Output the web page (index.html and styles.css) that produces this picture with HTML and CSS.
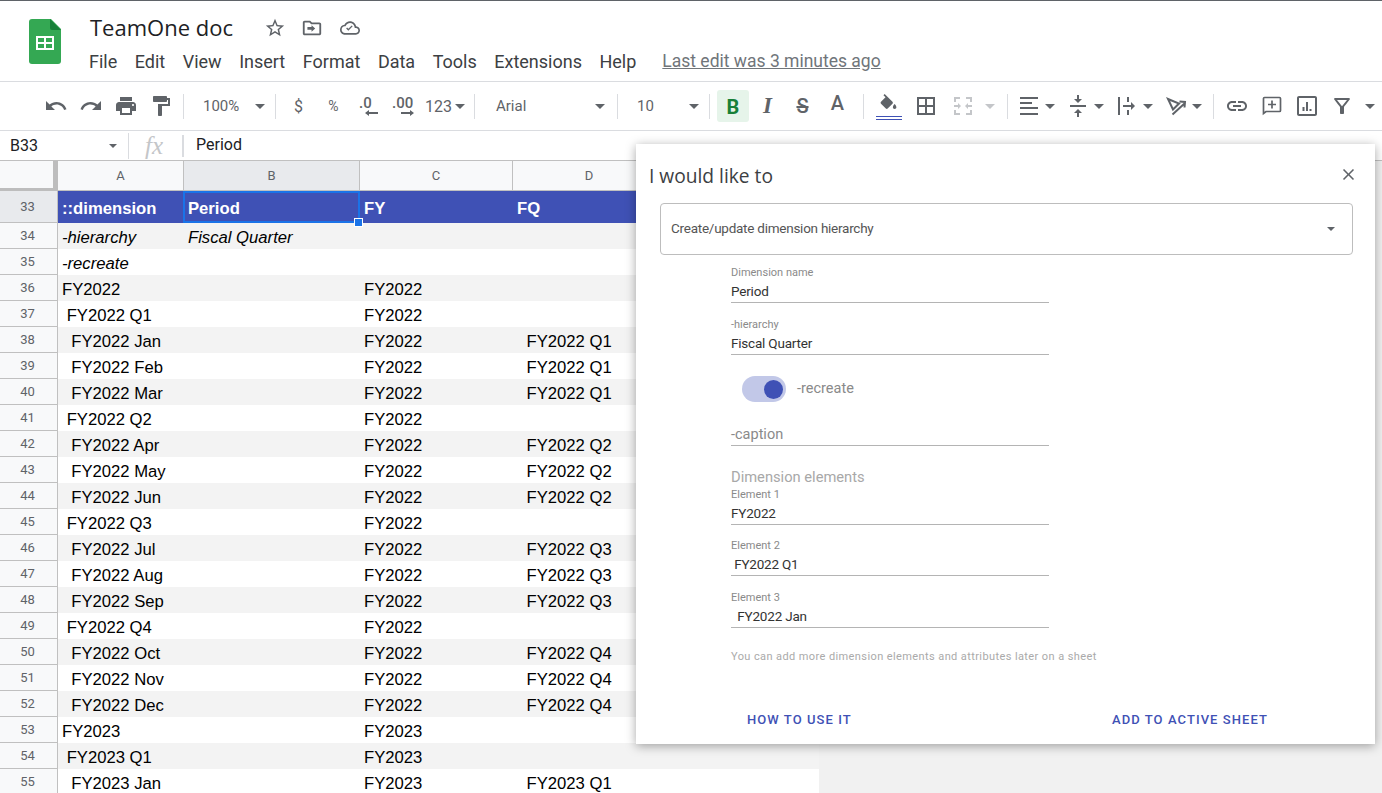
FILE: index.html
```html
<!DOCTYPE html>
<html lang="en">
<head>
    <meta charset="UTF-8">
    <title>TeamOne doc</title>
    <link rel="stylesheet" href="styles.css">
</head>
<body>

<header class="titlebar">
    <svg class="logo" width="32" height="45" viewBox="0 0 32 45">
        <path fill="#34a853" d="M3 0h19l10 10v32a3 3 0 0 1-3 3H3a3 3 0 0 1-3-3V3a3 3 0 0 1 3-3z"/>
        <path fill="#188038" d="M21 0l11 11H23a2 2 0 0 1-2-2z"/>
        <path fill="#fff" d="M7 17h18v14H7zm2 2v4h6v-4zm8 0v4h6v-4zm-8 6v4h6v-4zm8 0v4h6v-4z" fill-rule="evenodd"/>
    </svg>
    <div class="titlebar-main">
        <div class="doc-row">
            <span class="doc-name">TeamOne doc</span>
            <svg class="doc-icon" viewBox="0 0 24 24"><path d="M22 9.24l-7.19-.62L12 2 9.19 8.63 2 9.24l5.46 4.73L5.82 21 12 17.27 18.18 21l-1.63-7.03L22 9.24zM12 15.4l-3.76 2.27 1-4.28-3.32-2.88 4.38-.38L12 6.1l1.71 4.04 4.38.38-3.32 2.88 1 4.28L12 15.4z"/></svg>
            <svg class="doc-icon" viewBox="0 0 24 24"><path d="M20 6h-8l-2-2H4c-1.1 0-2 .9-2 2v12c0 1.1.9 2 2 2h16c1.1 0 2-.9 2-2V8c0-1.1-.9-2-2-2zm0 12H4V6h5.17l2 2H20v10zm-8.5-2l4-3.5-4-3.500V11H7v3h4.500z"/></svg>
            <svg class="doc-icon doc-icon-cloud" viewBox="0 0 24 24"><path d="M19.35 10.04C18.67 6.59 15.64 4 12 4 9.11 4 6.6 5.64 5.35 8.04 2.34 8.36 0 10.91 0 14c0 3.31 2.69 6 6 6h13c2.76 0 5-2.240 5-5 0-2.640-2.050-4.780-4.650-4.960zM19 18H6c-2.210 0-4-1.790-4-4 0-2.050 1.530-3.760 3.560-3.970l1.070-.11.500-.95C8.080 7.140 9.940 6 12 6c2.620 0 4.880 1.860 5.390 4.430l.3 1.500 1.530.11c1.560.1 2.780 1.410 2.780 2.960 0 1.650-1.350 3-3 3zm-9-2.800l-2.600-2.600 1.100-1.100 1.500 1.500 4.100-4.100 1.100 1.100z"/></svg>
        </div>
        <nav class="menu">
            <span>File</span><span>Edit</span><span>View</span><span>Insert</span><span>Format</span><span>Data</span><span>Tools</span><span>Extensions</span><span>Help</span>
            <a class="last-edit">Last edit was 3 minutes ago</a>
        </nav>
    </div>
</header>

<div class="toolbar">
    <span class="tb"><svg viewBox="0 0 24 24"><path d="M12.500 8c-2.650 0-5.050.99-6.900 2.600L2 7v9h9l-3.620-3.620c1.390-1.160 3.160-1.880 5.120-1.880 3.540 0 6.550 2.310 7.600 5.500l2.370-.78C21.080 11.030 17.150 8 12.500 8z"/></svg></span>
    <span class="tb"><svg viewBox="0 0 24 24"><path d="M18.400 10.600C16.550 8.990 14.150 8 11.500 8c-4.650 0-8.580 3.030-9.960 7.220L3.900 16c1.050-3.190 4.050-5.500 7.600-5.500 1.950 0 3.730.72 5.120 1.880L13 16h9V7l-3.600 3.600z"/></svg></span>
    <span class="tb"><svg viewBox="0 0 24 24"><path d="M19 8H5c-1.660 0-3 1.340-3 3v6h4v4h12v-4h4v-6c0-1.660-1.340-3-3-3zm-3 11H8v-5h8v5zm3-7c-.55 0-1-.45-1-1s.45-1 1-1 1 .45 1 1-.45 1-1 1zm-1-9H6v4h12V3z"/></svg></span>
    <span class="tb"><svg viewBox="0 0 24 24"><path d="M18 4V3c0-.55-.45-1-1-1H5c-.55 0-1 .45-1 1v4c0 .55.45 1 1 1h12c.55 0 1-.45 1-1V6h1v4H9v11c0 .55.45 1 1 1h2c.55 0 1-.45 1-1v-9h8V4h-3z"/></svg></span>
    <i class="sep sep-first"></i>
    <span class="pick pick-zoom">100%<b class="arrow"></b></span>
    <i class="sep"></i>
    <span class="tb tb-text tb-after">$</span>
    <span class="tb tb-text tb-small">%</span>
    <span class="tb"><svg viewBox="0 0 24 24"><text x="2" y="14" class="dec">.0</text><path d="M22 19H13v-2l-4 3 4 3v-2h9z" transform="translate(-1 -1)"/></svg></span>
    <span class="tb"><svg viewBox="0 0 24 24"><text x="0" y="14" class="dec">.00</text><path d="M10 19h9v-2l4 3-4 3v-2h-9z" transform="translate(-1 -1)"/></svg></span>
    <span class="num-format">123<b class="arrow"></b></span>
    <i class="sep sep-wide"></i>
    <span class="pick pick-font">Arial<b class="arrow"></b></span>
    <i class="sep"></i>
    <span class="pick pick-zoom">10<b class="arrow"></b></span>
    <i class="sep"></i>
    <span class="tb-bold">B</span>
    <span class="tb tb-glyph tb-italic">I</span>
    <span class="tb tb-glyph tb-strike">S</span>
    <span class="tb tb-glyph tb-color">A</span>
    <i class="sep sep-colors"></i>
    <span class="tb37 tb37-first fill-btn">
        <svg viewBox="0 0 24 24"><path d="M16.560 8.940L7.620 0 6.210 1.410l2.380 2.380-5.150 5.150c-.59.59-.59 1.540 0 2.120l5.500 5.500c.29.29.68.44 1.060.44s.77-.15 1.060-.44l5.500-5.500c.59-.58.59-1.530 0-2.120zM19 11.500s-2 2.170-2 3.500c0 1.100.9 2 2 2s2-.9 2-2c0-1.330-2-3.500-2-3.500z"/></svg>
        <i class="fill-bar"></i>
    </span>
    <span class="tb37"><svg viewBox="0 0 24 24"><path d="M3 3v18h18V3H3zm8 16H5v-6h6v6zm0-8H5V5h6v6zm8 8h-6v-6h6v6zm0-8h-6V5h6v6z"/></svg></span>
    <span class="tb37 tb-off"><svg viewBox="0 0 24 24"><path d="M3 3h6v2H5v3H3zm12 0h6v5h-2V5h-4zM3 16h2v3h4v2H3zm16 0h2v5h-6v-2h4zM3 11h4V9l3 3-3 3v-2H3zm18 0h-4V9l-3 3 3 3v-2h4z"/></svg></span>
    <b class="arrow arrow-off"></b>
    <i class="sep sep-merge"></i>
    <span class="pair pair-first"><svg viewBox="0 0 24 24"><path d="M3 3h18v2H3zm0 5h12v2H3zm0 5h18v2H3zm0 6h18v2H3z"/></svg><b class="arrow"></b></span>
    <span class="pair"><svg viewBox="0 0 24 24"><path d="M8 19h3v4h2v-4h3l-4-4-4 4zm8-14h-3V1h-2v4H8l4 4 4-4zM4 11v2h16v-2H4z"/></svg><b class="arrow"></b></span>
    <span class="pair"><svg viewBox="0 0 24 24"><path d="M3 3h2v18H3zm9 0h2v5h-2zm0 13h2v5h-2zM8 11h8V8l4 4-4 4v-3H8z"/></svg><b class="arrow"></b></span>
    <span class="pair"><svg class="line-icon" viewBox="0 0 24 24"><path d="M4 5l11 4.500-6 6zM8.500 20.500l12-11M15.500 7.500l5.500 .5-.5 5.500"/></svg><b class="arrow"></b></span>
    <i class="sep"></i>
    <span class="tb tb-after"><svg viewBox="0 0 24 24"><path d="M3.900 12c0-1.710 1.390-3.100 3.100-3.100h4V7H7c-2.760 0-5 2.240-5 5s2.240 5 5 5h4v-1.900H7c-1.710 0-3.100-1.390-3.100-3.100zM8 13h8v-2H8v2zm9-6h-4v1.900h4c1.710 0 3.100 1.390 3.100 3.100s-1.390 3.100-3.100 3.100h-4V17h4c2.760 0 5-2.240 5-5s-2.240-5-5-5z"/></svg></span>
    <span class="tb"><svg class="line-icon line-thin" viewBox="0 0 24 24"><path d="M3.500 19.500V4.500a1 1 0 0 1 1-1h15a1 1 0 0 1 1 1v12a1 1 0 0 1-1 1H6zM12 6.500v8M8 10.500h8"/></svg></span>
    <span class="tb"><svg viewBox="0 0 24 24"><path d="M20 2H4c-1.100 0-2 .9-2 2v16c0 1.100.9 2 2 2h16c1.100 0 2-.9 2-2V4c0-1.100-.9-2-2-2zm0 18H4V4h16v16zM7.500 13h2v4h-2zm3.500-5h2v9h-2zm3.500 7h2v2h-2z"/></svg></span>
    <span class="tb"><svg viewBox="0 0 24 24"><path d="M7 6h10l-5.010 6.300L7 6zm-2.750-.39C6.270 8.200 10 13 10 13v6c0 .55.45 1 1 1h2c.55 0 1-.45 1-1v-6s3.720-4.800 5.740-7.390c.51-.66.04-1.610-.79-1.610H5.040c-.83 0-1.300.95-.79 1.610z"/></svg></span>
    <b class="arrow arrow-last"></b>
</div>

<div class="formula">
    <div class="namebox">B33<b class="arrow arrow-mini"></b></div>
    <span class="fx">fx</span>
    <div class="formula-value">Period</div>
</div>

<div class="sheet">
    <div class="col-head">
        <div class="corner"></div>
        <div class="col col-a">A</div>
        <div class="col col-b col-on">B</div>
        <div class="col col-c">C</div>
        <div class="col col-d">D</div>
    </div>

    <div class="row row-head">
        <div class="num num-on">33</div>
        <div class="cell col-a">::dimension</div>
        <div class="cell col-b">Period<i class="selection"></i></div>
        <div class="cell col-c">FY</div>
        <div class="cell col-d">FQ</div>
    </div>
    <div class="row"><div class="num">34</div><div class="cell col-a em">-hierarchy</div><div class="cell col-b em">Fiscal Quarter</div><div class="cell col-c"></div><div class="cell col-d"></div></div>
    <div class="row"><div class="num">35</div><div class="cell col-a em">-recreate</div><div class="cell col-b"></div><div class="cell col-c"></div><div class="cell col-d"></div></div>
    <div class="row"><div class="num">36</div><div class="cell col-a">FY2022</div><div class="cell col-b"></div><div class="cell col-c">FY2022</div><div class="cell col-d"></div></div>
    <div class="row"><div class="num">37</div><div class="cell col-a"> FY2022 Q1</div><div class="cell col-b"></div><div class="cell col-c">FY2022</div><div class="cell col-d"></div></div>
    <div class="row"><div class="num">38</div><div class="cell col-a">  FY2022 Jan</div><div class="cell col-b"></div><div class="cell col-c">FY2022</div><div class="cell col-d">FY2022 Q1</div></div>
    <div class="row"><div class="num">39</div><div class="cell col-a">  FY2022 Feb</div><div class="cell col-b"></div><div class="cell col-c">FY2022</div><div class="cell col-d">FY2022 Q1</div></div>
    <div class="row"><div class="num">40</div><div class="cell col-a">  FY2022 Mar</div><div class="cell col-b"></div><div class="cell col-c">FY2022</div><div class="cell col-d">FY2022 Q1</div></div>
    <div class="row"><div class="num">41</div><div class="cell col-a"> FY2022 Q2</div><div class="cell col-b"></div><div class="cell col-c">FY2022</div><div class="cell col-d"></div></div>
    <div class="row"><div class="num">42</div><div class="cell col-a">  FY2022 Apr</div><div class="cell col-b"></div><div class="cell col-c">FY2022</div><div class="cell col-d">FY2022 Q2</div></div>
    <div class="row"><div class="num">43</div><div class="cell col-a">  FY2022 May</div><div class="cell col-b"></div><div class="cell col-c">FY2022</div><div class="cell col-d">FY2022 Q2</div></div>
    <div class="row"><div class="num">44</div><div class="cell col-a">  FY2022 Jun</div><div class="cell col-b"></div><div class="cell col-c">FY2022</div><div class="cell col-d">FY2022 Q2</div></div>
    <div class="row"><div class="num">45</div><div class="cell col-a"> FY2022 Q3</div><div class="cell col-b"></div><div class="cell col-c">FY2022</div><div class="cell col-d"></div></div>
    <div class="row"><div class="num">46</div><div class="cell col-a">  FY2022 Jul</div><div class="cell col-b"></div><div class="cell col-c">FY2022</div><div class="cell col-d">FY2022 Q3</div></div>
    <div class="row"><div class="num">47</div><div class="cell col-a">  FY2022 Aug</div><div class="cell col-b"></div><div class="cell col-c">FY2022</div><div class="cell col-d">FY2022 Q3</div></div>
    <div class="row"><div class="num">48</div><div class="cell col-a">  FY2022 Sep</div><div class="cell col-b"></div><div class="cell col-c">FY2022</div><div class="cell col-d">FY2022 Q3</div></div>
    <div class="row"><div class="num">49</div><div class="cell col-a"> FY2022 Q4</div><div class="cell col-b"></div><div class="cell col-c">FY2022</div><div class="cell col-d"></div></div>
    <div class="row"><div class="num">50</div><div class="cell col-a">  FY2022 Oct</div><div class="cell col-b"></div><div class="cell col-c">FY2022</div><div class="cell col-d">FY2022 Q4</div></div>
    <div class="row"><div class="num">51</div><div class="cell col-a">  FY2022 Nov</div><div class="cell col-b"></div><div class="cell col-c">FY2022</div><div class="cell col-d">FY2022 Q4</div></div>
    <div class="row"><div class="num">52</div><div class="cell col-a">  FY2022 Dec</div><div class="cell col-b"></div><div class="cell col-c">FY2022</div><div class="cell col-d">FY2022 Q4</div></div>
    <div class="row"><div class="num">53</div><div class="cell col-a">FY2023</div><div class="cell col-b"></div><div class="cell col-c">FY2023</div><div class="cell col-d"></div></div>
    <div class="row"><div class="num">54</div><div class="cell col-a"> FY2023 Q1</div><div class="cell col-b"></div><div class="cell col-c">FY2023</div><div class="cell col-d"></div></div>
    <div class="row"><div class="num">55</div><div class="cell col-a">  FY2023 Jan</div><div class="cell col-b"></div><div class="cell col-c">FY2023</div><div class="cell col-d">FY2023 Q1</div></div>
</div>

<!-- add-on dialog, lies over the sheet -->
<section class="dialog">
    <div class="dialog-head">
        <h2>I would like to</h2>
        <svg class="close" viewBox="0 0 24 24"><path d="M19 6.410L17.590 5 12 10.590 6.410 5 5 6.410 10.590 12 5 17.590 6.410 19 12 13.410 17.590 19 19 17.590 13.410 12z"/></svg>
    </div>
    <div class="select"><span>Create/update dimension hierarchy</span><b class="arrow arrow-select"></b></div>
    <div class="form">
        <div class="field"><label>Dimension name</label><div class="value">Period</div></div>
        <div class="field"><label>-hierarchy</label><div class="value">Fiscal Quarter</div></div>
        <div class="switch-row">
            <span class="switch"><i></i></span>
            <span class="switch-label">-recreate</span>
        </div>
        <div class="value value-empty">-caption</div>
        <div class="elements-title">Dimension elements</div>
        <div class="field"><label>Element 1</label><div class="value">FY2022</div></div>
        <div class="field"><label>Element 2</label><div class="value"> FY2022 Q1</div></div>
        <div class="field"><label>Element 3</label><div class="value">  FY2022 Jan</div></div>
        <p class="note">You can add more dimension elements and attributes later on a sheet</p>
    </div>
    <div class="actions">
        <span class="action">HOW TO USE IT</span>
        <span class="action">ADD TO ACTIVE SHEET</span>
    </div>
</section>

</body>
</html>
```

FILE: styles.css
```css
html, body {
    height: 100%;
}
body {
    margin: 0;
    overflow: hidden;
    position: relative;
    font-family: "Liberation Sans", Arial, sans-serif;
    background-color: #fff;
    border-top: 1px solid #5f6368;
    box-sizing: border-box;
}

/* title + menus */
.titlebar {
    height: 81px;
    display: flex;
    box-sizing: border-box;
    border-bottom: 1px solid #dadce0;
}
.logo {
    margin: 18px 0 0 29px;
}
.titlebar-main {
    margin-left: 29px;
}
.doc-row {
    height: 38px;
    display: flex;
    align-items: center;
    margin-top: 8px;
}
.doc-name {
    font-family: "Open Sans", sans-serif;
    font-size: 22px;
    color: #202124;
    margin: -2px 31px 0 0;
    width: 143px;
    white-space: nowrap;
}
.doc-icon {
    width: 22px;
    height: 22px;
    fill: #5f6368;
    margin-right: 15px;
}
.doc-icon-cloud {
    width: 20px;
    height: 20px;
    margin-left: 2px;
}
.menu {
    display: flex;
    font-family: Roboto, sans-serif;
    font-size: 18px;
    color: #3c4043;
    gap: 17.5px;
    margin-top: 4px;
    margin-left: -1px;
    white-space: nowrap;
}
.last-edit {
    margin-left: 8.5px;
    font-size: 17.5px;
    line-height: 21px;
    color: #70757a;
    text-decoration: underline;
}

/* toolbar */
.toolbar {
    height: 49px;
    box-sizing: border-box;
    display: flex;
    align-items: center;
    padding-left: 38px;
    border-bottom: 1px solid #dadce0;
    font-family: Roboto, sans-serif;
    color: #5f6368;
    white-space: nowrap;
}
.toolbar svg {
    width: 24px;
    height: 24px;
    fill: #5f6368;
    flex: none;
}
.toolbar .line-icon {
    fill: none;
    stroke: #5f6368;
    stroke-width: 2;
}
.toolbar .line-thin {
    stroke-width: 1.7;
}
.tb {
    width: 35px;
    height: 32px;
    display: flex;
    align-items: center;
    justify-content: center;
    flex: none;
}
.tb-text {
    font-size: 16px;
}
.tb-small {
    font-size: 14px;
}
.tb-after {
    margin-left: 5px;
}
.tb37 {
    width: 37px;
    height: 32px;
    display: flex;
    flex-direction: column;
    align-items: center;
    justify-content: center;
    flex: none;
}
.tb37-first {
    margin-left: 6px;
}
.tb-off svg {
    fill: #c4c6c9;
}
.toolbar .fill-btn svg {
    width: 21px;
    height: 21px;
    margin-top: 1px;
}
.fill-bar {
    display: block;
    width: 26px;
    height: 4px;
    border-top: 1px solid #3f51b5;
    border-bottom: 1px solid #3f51b5;
    box-sizing: border-box;
    margin-top: 1px;
}
.dec {
    font: 500 15px Roboto, sans-serif;
    fill: #5f6368;
}
.num-format {
    width: 48px;
    box-sizing: border-box;
    padding-left: 4px;
    font-size: 16px;
    display: flex;
    align-items: center;
    gap: 3px;
    flex: none;
}
.sep {
    width: 1px;
    height: 25px;
    background: #dadce0;
    flex: none;
}
.sep-first {
    margin-left: 5px;
}
.sep-wide {
    margin-left: 5px;
}
.sep-colors {
    margin-left: 8px;
}
.sep-merge {
    margin-left: 12px;
}
.pick {
    display: flex;
    align-items: center;
    justify-content: space-between;
    box-sizing: border-box;
    font-size: 15px;
    flex: none;
}
.pick-zoom {
    width: 91px;
    padding: 0 10px 0 19px;
}
.pick-font {
    width: 142px;
    padding: 0 12px 0 21px;
}
.arrow {
    display: block;
    width: 0;
    height: 0;
    border-left: 5px solid transparent;
    border-right: 5px solid transparent;
    border-top: 5px solid #5f6368;
    flex: none;
}
.arrow-off {
    margin-left: 4px;
    border-top-color: #c4c6c9;
}
.arrow-last {
    margin-left: 6px;
}
.arrow-mini {
    border-left-width: 4px;
    border-right-width: 4px;
    border-top-width: 4px;
}
.arrow-select {
    border-left-width: 4px;
    border-right-width: 4px;
    border-top-width: 4px;
    margin-top: 2px;
}
.tb-bold {
    width: 32px;
    height: 32px;
    margin-left: 7px;
    border-radius: 3px;
    background: #e6f4ea;
    color: #188038;
    font-family: Roboto, sans-serif;
    font-weight: 700;
    font-size: 20px;
    line-height: 34px;
    text-align: center;
    flex: none;
}
.tb-glyph {
    font-size: 20px;
    font-family: Roboto, sans-serif;
}
.tb-italic {
    margin-left: 1px;
    font-family: "Liberation Serif", serif;
    font-size: 23px;
    font-weight: 700;
    font-style: italic;
}
.tb-strike {
    font-weight: 500;
    text-decoration: line-through;
}
.tb-color {
    font-weight: 500;
    padding-bottom: 6px;
    box-sizing: border-box;
}
.pair {
    width: 49px;
    display: flex;
    align-items: center;
    flex: none;
}
.pair .arrow {
    margin-left: 4px;
}
.pair-first {
    margin-left: 9px;
}

/* formula bar */
.formula {
    height: 30px;
    box-sizing: border-box;
    display: flex;
    align-items: center;
    border-bottom: 1px solid #c0c0c0;
    font-family: Roboto, sans-serif;
    font-size: 16px;
    color: #202124;
}
.namebox {
    width: 129px;
    height: 26px;
    box-sizing: border-box;
    padding: 0 11px 0 10px;
    border-right: 1px solid #dadce0;
    display: flex;
    align-items: center;
    justify-content: space-between;
}
.fx {
    width: 55px;
    height: 22px;
    box-sizing: border-box;
    padding-left: 16px;
    border-right: 2px solid #dadce0;
    font: italic 25px/22px "Liberation Serif", serif;
    color: #c4c6c9;
}
.formula-value {
    padding: 0 0 2px 12px;
}

/* grid */
.sheet {
    background: #f1f1f1;
    height: 640px;
}
.col-head {
    height: 30px;
    width: 819px;
    display: flex;
    background: #f8f9fa;
    font-family: Roboto, sans-serif;
    font-size: 13px;
    color: #5f6368;
    box-sizing: border-box;
    border-bottom: 1px solid #c0c0c0;
}
.corner {
    width: 58px;
    box-sizing: border-box;
    border-right: 5px solid #bdbdbd;
    border-bottom: 3px solid #bdbdbd;
    margin-bottom: -1px;
    flex: none;
}
.col {
    border-right: 1px solid #c0c0c0;
    box-sizing: border-box;
    text-align: center;
    line-height: 30px;
    flex: none;
}
.col-on {
    background: #e8eaed;
}
.col-a { width: 126px; }
.col-b { width: 176px; }
.col-c { width: 153px; }
.col-d { width: 153px; }
.row {
    height: 26px;
    width: 819px;
    display: flex;
    background: #fff;
    white-space: pre;
    font-size: 16.67px;
    color: #000;
}
.row:nth-child(odd) {
    background: #f3f3f3;
}
.row.row-head {
    height: 32px;
    background: #3f51b5;
    color: #fff;
    font-weight: 700;
}
.num {
    width: 58px;
    flex: none;
    box-sizing: border-box;
    background: #f8f9fa;
    border-right: 1px solid #c0c0c0;
    border-bottom: 1px solid #c0c0c0;
    color: #5f6368;
    font-family: Roboto, sans-serif;
    font-size: 13px;
    font-weight: 400;
    text-align: center;
    padding-right: 2px;
    line-height: 25px;
}
.row-head .num {
    line-height: 31px;
}
.num-on {
    background: #e8eaed;
}
.cell {
    box-sizing: border-box;
    padding-left: 4px;
    line-height: 29px;
    position: relative;
    flex: none;
}
.row-head .cell {
    line-height: 35px;
}
.cell.em {
    font-style: italic;
}
.col-d.cell {
    padding-left: 13.5px;
}
.row-head .col-d.cell {
    padding-left: 4px;
}
.selection {
    position: absolute;
    left: -1px;
    top: 0;
    right: 0;
    bottom: 0;
    border: 2px solid #1a73e8;
    box-sizing: border-box;
}
.selection::after {
    content: "";
    position: absolute;
    right: -5px;
    bottom: -6px;
    width: 7px;
    height: 7px;
    background: #1a73e8;
    border: 1px solid #fff;
}

/* dialog */
.dialog {
    position: absolute;
    left: 636px;
    top: 143px;
    width: 739px;
    height: 600px;
    box-sizing: border-box;
    padding: 0 22px 0 24px;
    background: #fff;
    box-shadow: 0 2px 10px rgba(0, 0, 0, 0.35);
    font-family: Roboto, sans-serif;
}
.dialog-head {
    height: 59px;
    box-sizing: border-box;
    padding-top: 3px;
    display: flex;
    justify-content: space-between;
    align-items: center;
    margin-left: -11px;
    margin-right: -5px;
}
.dialog-head h2 {
    margin: 0;
    font-family: "Open Sans", sans-serif;
    font-weight: 400;
    font-size: 19.2px;
    color: #3c4043;
}
.close {
    width: 19px;
    height: 19px;
    fill: #5f6368;
    margin-top: -1px;
}
.select {
    height: 52px;
    box-sizing: border-box;
    border: 1px solid #bdbdbd;
    border-radius: 4px;
    display: flex;
    align-items: center;
    justify-content: space-between;
    padding: 0 17px 2px 10px;
    font-size: 13.5px;
    letter-spacing: -0.25px;
    color: #555;
}
.form {
    width: 318px;
    margin: 11px 0 0 71px;
}
.field {
    height: 37px;
    margin-bottom: 14.5px;
}
.field label {
    display: block;
    height: 14px;
    line-height: 14px;
    font-size: 11px;
    color: #8a8a8a;
}
.value {
    height: 23px;
    line-height: 23px;
    box-sizing: border-box;
    border-bottom: 1px solid #b4b4b4;
    font-size: 13.5px;
    letter-spacing: -0.2px;
    color: #333;
    white-space: pre;
}
.value-empty {
    font-size: 14.5px;
    letter-spacing: 0;
    color: #8a8a8a;
}
.switch-row {
    display: flex;
    align-items: center;
    height: 26px;
    margin: 21.5px 0 21px 11px;
}
.switch {
    width: 44px;
    height: 26px;
    border-radius: 13px;
    background: #c2c8e8;
    display: flex;
    align-items: center;
    justify-content: flex-end;
    padding-right: 3px;
    box-sizing: border-box;
}
.switch i {
    display: block;
    width: 19px;
    height: 19px;
    border-radius: 50%;
    background: #3f51b5;
}
.switch-label {
    margin: -1px 0 0 11px;
    font-size: 14.5px;
    color: #8a8a8a;
}
.elements-title {
    margin-top: 22px;
    font-size: 14.7px;
    line-height: 18px;
    color: #a8a8a8;
}
.elements-title + .field {
    margin-top: 1.5px;
}
.note {
    margin: 22.5px 0 0;
    font-size: 11px;
    line-height: 14px;
    letter-spacing: 0.4px;
    color: #aaa;
    white-space: nowrap;
}
.actions {
    display: flex;
    justify-content: space-between;
    margin: 48px 85px 0 87px;
}
.action {
    font-size: 13px;
    font-weight: 500;
    letter-spacing: 1.07px;
    color: #3f51b5;
}
```
